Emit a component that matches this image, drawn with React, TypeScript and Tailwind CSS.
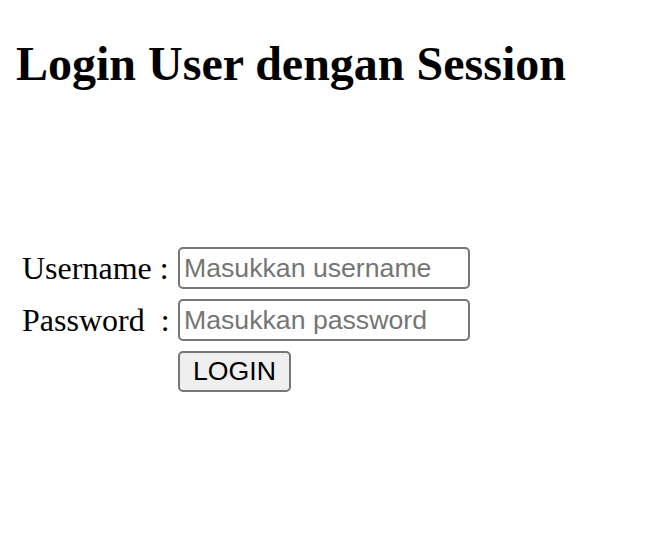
const App = () => {
  return (
    <div className="min-h-screen bg-white px-4 pt-[36px] text-black" style={{ fontFamily: '"Liberation Serif", serif' }}>
      <h2 className="text-[48px] font-bold leading-[55px]">Login User dengan Session</h2>

      <form className="mt-[156px] ml-[6px] grid grid-cols-[150px_auto] items-center gap-x-[6px] gap-y-[10px]">
        <label className="text-[32px] leading-[37px]">Username :</label>
        <input
          type="text"
          placeholder="Masukkan username"
          className="h-[42px] w-[292px] rounded-[5px] border-2 border-[#767676] px-[4px] font-['Liberation_Sans',sans-serif] text-[26.67px] placeholder:text-[#757575] outline-none"
        />

        <label className="text-[32px] leading-[37px] whitespace-pre">Password  :</label>
        <input
          type="password"
          placeholder="Masukkan password"
          className="h-[42px] w-[292px] rounded-[5px] border-2 border-[#767676] px-[4px] font-['Liberation_Sans',sans-serif] text-[26.67px] placeholder:text-[#757575] outline-none"
        />

        <div />
        <div>
          <button
            type="button"
            className="h-[41px] w-[113px] rounded-[5px] border-2 border-[#767676] bg-[#efefef] font-['Liberation_Sans',sans-serif] text-[26.67px] leading-none text-black"
          >
            LOGIN
          </button>
        </div>
      </form>
    </div>
  );
};

export default App;
